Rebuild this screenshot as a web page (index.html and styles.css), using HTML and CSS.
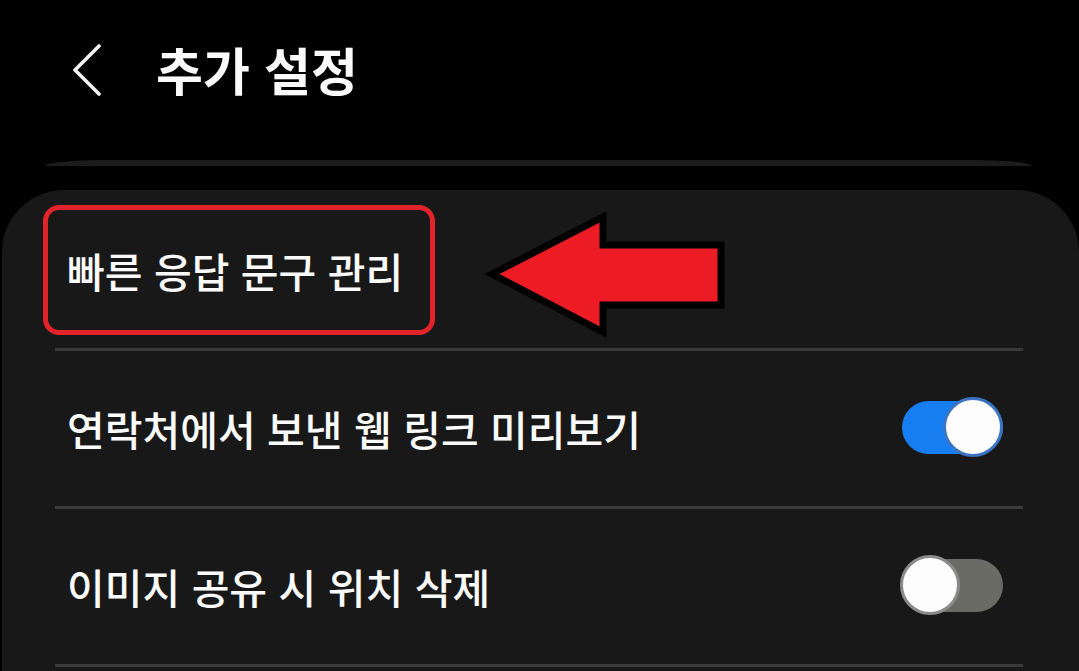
FILE: index.html
```html
<!DOCTYPE html>
<html lang="ko">
<head>
<meta charset="utf-8">
<link rel="stylesheet" href="styles.css">
</head>
<body>
<div class="screen">
  <header class="header">
    <svg class="back" width="30" height="52" viewBox="0 0 30 52">
      <polyline points="27,2 3,26 27,50" fill="none" stroke="#f5f5f5" stroke-width="3.6" stroke-linecap="round" stroke-linejoin="round"/>
    </svg>
    <h1 class="title">추가 설정</h1>
  </header>
  <div class="peek"></div>
  <section class="card">
    <div class="row-first">
      <div class="highlight"><span class="label">빠른 응답 문구 관리</span></div>
      <svg class="arrow" width="250" height="140" viewBox="0 0 250 140">
        <polygon points="12,68 123,11 123,39 241,39 241,99 123,99 123,126" fill="#ed1c24" stroke="#000" stroke-width="7" stroke-linejoin="miter"/>
      </svg>
    </div>
    <div class="sep"></div>
    <div class="row">
      <span class="label">연락처에서 보낸 웹 링크 미리보기</span>
      <div class="toggle on"><div class="track"></div><div class="thumb"></div></div>
    </div>
    <div class="sep"></div>
    <div class="row">
      <span class="label">이미지 공유 시 위치 삭제</span>
      <div class="toggle off"><div class="track"></div><div class="thumb"></div></div>
    </div>
    <div class="sep"></div>
  </section>
</div>
</body>
</html>
```
FILE: styles.css
```css
* { box-sizing: border-box; }
html, body { margin: 0; padding: 0; background: #000; }
body {
  width: 1079px;
  height: 671px;
  overflow: hidden;
  font-family: "Noto Sans CJK KR", "Noto Sans", sans-serif;
  color: #fafafa;
}
.screen { display: flex; flex-direction: column; }
.header {
  height: 144px;
  margin-bottom: 16px;
  display: flex;
  align-items: center;
  padding-left: 72px;
}
.back { margin-bottom: 4px; flex: none; }
.title {
  margin: 0 0 6px 54px;
  font-size: 51px;
  font-weight: 700;
  letter-spacing: 0;
  line-height: 1;
}
.peek {
  height: 6px;
  margin: 0 47px 0 45px;
  background: #1c1c1c;
  border-radius: 60px 60px 0 0 / 6px 6px 0 0;
}
.card {
  margin: 24px 0 0 2px;
  background: #181818;
  border-radius: 62px 62px 0 0;
  height: 481px;
}
.row-first {
  display: flex;
  align-items: flex-start;
  padding: 15px 0 13px 41px;
}
.highlight {
  width: 392px;
  height: 130px;
  border: 5px solid #e3232a;
  border-radius: 16px;
  display: flex;
  align-items: center;
  padding-left: 19px;
}
.label {
  font-size: 41px;
  font-weight: 500;
  line-height: 1;
  white-space: nowrap;
}
.arrow { margin: 1px 0 -11px 45px; flex: none; }
.sep {
  height: 3px;
  margin: 0 54px 0 53px;
  background: #3a3a3a;
  width: 968px;
}
.row {
  height: 155px;
  display: flex;
  align-items: center;
  justify-content: space-between;
  padding: 0 75px 0 65px;
}
.toggle {
  position: relative;
  width: 104px;
  height: 60px;
  flex: none;
}
.track {
  position: absolute;
  left: 2px;
  right: 1px;
  top: 4px;
  height: 53px;
  border-radius: 27px;
}
.thumb {
  position: absolute;
  top: 0;
  width: 60px;
  height: 60px;
  border-radius: 50%;
  background: #fdfdfd;
  border: 3px solid;
}
.on { margin-top: -4px; }
.on .track { background: #167ef0; }
.on .thumb { right: 1px; border-color: #3a74c2; }
.off { margin-top: -4px; }
.off .track { background: #6a6b64; }
.off .thumb { left: 0; border-color: #8a8a8a; }
```
